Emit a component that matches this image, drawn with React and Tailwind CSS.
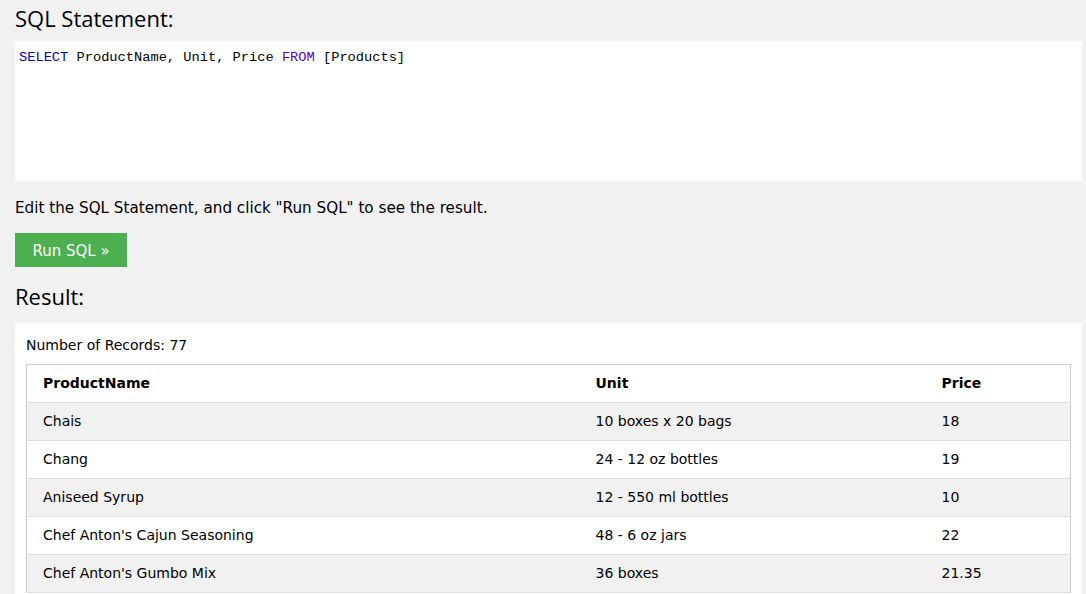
import React from 'react'

const rows = [
  { name: 'Chais', unit: '10 boxes x 20 bags', price: '18' },
  { name: 'Chang', unit: '24 - 12 oz bottles', price: '19' },
  { name: 'Aniseed Syrup', unit: '12 - 550 ml bottles', price: '10' },
  { name: "Chef Anton's Cajun Seasoning", unit: '48 - 6 oz jars', price: '22' },
  { name: "Chef Anton's Gumbo Mix", unit: '36 boxes', price: '21.35' },
]

export default function App() {
  return (
    <div className="min-h-screen bg-[#f1f1f1] pl-[15px] pr-[4px] text-black font-['DejaVu_Sans',Verdana,sans-serif]">
      {/* SQL statement */}
      <h3 className="pt-[4px] text-[22px] leading-[28px] font-['Open_Sans',sans-serif] text-black">
        SQL Statement:
      </h3>
      <div className="mt-[9px] h-[140px] bg-white pl-[4px] pt-[7px] font-['Liberation_Mono',monospace] text-[13.7px] leading-[19px]">
        <span className="text-[#0000cd]">SELECT</span> ProductName, Unit, Price{' '}
        <span className="text-[#5500cc]">FROM</span> [Products]
      </div>

      <p className="mt-[18px] text-[15.2px] leading-[18px]">
        Edit the SQL Statement, and click "Run SQL" to see the result.
      </p>

      <button className="mt-[16px] flex h-[34px] w-[112px] items-center justify-center bg-[#4caf50] pt-[2px] text-[15px] text-white">
        Run SQL »
      </button>

      {/* Result */}
      <h3 className="mt-[15px] text-[22px] leading-[28px] font-['Open_Sans',sans-serif]">Result:</h3>
      <div className="mt-[13px] bg-white px-[11px] pt-[13px] pb-4">
        <div className="text-[14px] leading-[18px]">Number of Records: 77</div>
        <table className="mt-[10px] w-full border border-[#cccccc] text-[14px] border-collapse">
          <thead>
            <tr className="h-[38px] border-b border-[#dddddd]">
              <th className="w-[553px] pl-4 text-left font-bold">ProductName</th>
              <th className="w-[346px] pl-4 text-left font-bold">Unit</th>
              <th className="pl-4 text-left font-bold">Price</th>
            </tr>
          </thead>
          <tbody>
            {rows.map((r, i) => (
              <tr
                key={r.name}
                className={`h-[38px] border-b border-[#dddddd] ${i % 2 === 0 ? 'bg-[#f1f1f1]' : 'bg-white'}`}
              >
                <td className="pl-4">{r.name}</td>
                <td className="pl-4">{r.unit}</td>
                <td className="pl-4">{r.price}</td>
              </tr>
            ))}
          </tbody>
        </table>
      </div>
    </div>
  )
}
